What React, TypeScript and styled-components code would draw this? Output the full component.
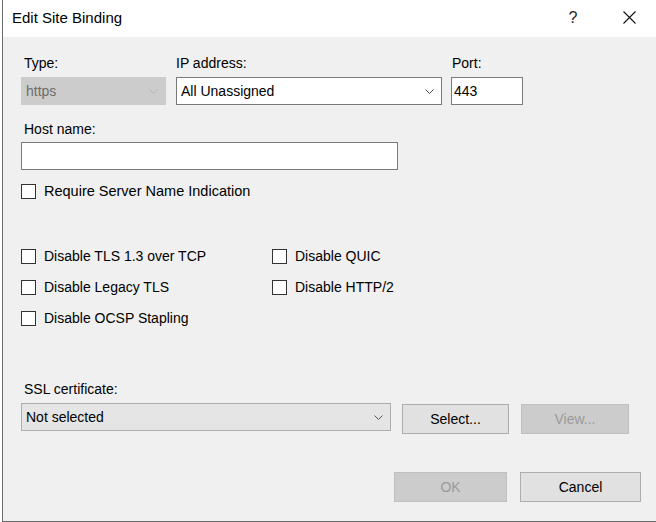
import React from 'react'
import styled, { createGlobalStyle } from 'styled-components';

const GlobalStyle = createGlobalStyle`
    html, body {
        margin: 0;
        padding: 0;
        background: #ffffff;
        font-family: "Liberation Sans", Arial, sans-serif;
        font-size: 14px;
        color: #000;
    }
    * { box-sizing: border-box; }
`

const Window = styled.div`
    margin-left: 2px;
    width: 654px;
    height: 522px;
    border-left: 1px solid #6b6b6b;
    border-bottom: 1px solid #6b6b6b;
    background: #f0f0f0;
    display: flex;
    flex-direction: column;
`

const TitleBar = styled.div`
    height: 37px;
    background: #fff;
    display: flex;
    align-items: center;
    padding-left: 9px;
    padding-right: 4px;
`

const Title = styled.div`
    flex: 1;
    font-size: 15px;
    padding-bottom: 2px;
`

const TitleButton = styled.div<{ $width: number }>`
    width: ${p => p.$width}px;
    height: 37px;
    display: flex;
    align-items: center;
    justify-content: center;
    font-size: 16px;
    color: #222;
    padding-bottom: 2px;
`

const Body = styled.div`
    padding: 18px 0 0 18px;
    display: flex;
    flex-direction: column;
`

const FieldRow = styled.div`
    display: flex;
`

const Field = styled.div<{ $width: number; $gap?: number }>`
    width: ${p => p.$width}px;
    margin-left: ${p => p.$gap || 0}px;
    display: flex;
    flex-direction: column;
`

const Label = styled.div<{ $indent?: number; $mb?: number }>`
    height: 16px;
    line-height: 16px;
    padding-left: ${p => p.$indent ?? 3}px;
    margin-bottom: ${p => p.$mb ?? 6}px;
`

const Combo = styled.div<{ $variant: 'disabled' | 'white' | 'button' }>`
    height: 28px;
    display: flex;
    align-items: center;
    padding: 0 7px 0 4px;
    border: 1px solid ${p => p.$variant === 'white' ? '#7a7a7a' : p.$variant === 'button' ? '#adadad' : '#cccccc'};
    background: ${p => p.$variant === 'white' ? '#ffffff' : p.$variant === 'button' ? '#e5e5e5' : '#cccccc'};
    color: ${p => p.$variant === 'disabled' ? '#6d6d6d' : '#000'};
`

const ComboText = styled.span`
    flex: 1;
    padding-bottom: 1px;
`

const TextBox = styled.div<{ $width: number }>`
    width: ${p => p.$width}px;
    height: 28px;
    border: 1px solid #7a7a7a;
    background: #fff;
    display: flex;
    align-items: center;
    padding: 0 0 1px 2px;
`

const CheckRow = styled.label<{ $size?: number }>`
    display: flex;
    align-items: center;
    gap: 8px;
    height: 16px;
    font-size: ${p => p.$size ?? 14}px;
`

const Box = styled.span`
    width: 15px;
    height: 15px;
    border: 1px solid #333;
    background: #fff;
    flex: none;
`

const OptionGrid = styled.div`
    display: grid;
    grid-template-columns: 251px auto;
    row-gap: 15px;
    margin-top: 49px;
`

const SslRow = styled.div`
    display: flex;
    align-items: flex-start;
`

const Button = styled.div<{ $width: number; $gap?: number; $disabled?: boolean }>`
    width: ${p => p.$width}px;
    height: 30px;
    margin-left: ${p => p.$gap || 0}px;
    display: flex;
    align-items: center;
    justify-content: center;
    padding-bottom: 1px;
    border: 1px solid ${p => p.$disabled ? '#bfbfbf' : '#adadad'};
    background: ${p => p.$disabled ? '#cccccc' : '#e1e1e1'};
    color: ${p => p.$disabled ? '#9a9a9a' : '#000'};
`

const Footer = styled.div`
    display: flex;
    justify-content: flex-end;
    padding-right: 15px;
    margin-top: 38px;
`

function Chevron({ color }: { color: string }) {
    return (
        <svg width="9" height="5" viewBox="0 0 9 5">
            <path d="M0.5 0.5 L4.5 4.5 L8.5 0.5" fill="none" stroke={color} strokeWidth="1" />
        </svg>
    )
}

function Check({ text, size }: { text: string; size?: number }) {
    return (
        <CheckRow $size={size}>
            <Box />
            <span>{text}</span>
        </CheckRow>
    )
}

export default function App() {
    return (
        <>
            <GlobalStyle />
            <Window>
                <TitleBar>
                    <Title>Edit Site Binding</Title>
                    <TitleButton $width={66}>?</TitleButton>
                    <TitleButton $width={46}>
                        <svg width="13" height="13" viewBox="0 0 13 13">
                            <path d="M0.5 0.5 L12.5 12.5 M12.5 0.5 L0.5 12.5" stroke="#111" strokeWidth="1.1" />
                        </svg>
                    </TitleButton>
                </TitleBar>
                <Body>
                    <FieldRow>
                        <Field $width={145}>
                            <Label>Type:</Label>
                            <Combo $variant="disabled">
                                <ComboText>https</ComboText>
                                <Chevron color="#b0b0b0" />
                            </Combo>
                        </Field>
                        <Field $width={266} $gap={10}>
                            <Label $indent={0}>IP address:</Label>
                            <Combo $variant="white">
                                <ComboText>All Unassigned</ComboText>
                                <Chevron color="#555" />
                            </Combo>
                        </Field>
                        <Field $width={72} $gap={9}>
                            <Label $indent={1}>Port:</Label>
                            <TextBox $width={72}>443</TextBox>
                        </Field>
                    </FieldRow>

                    <Field $width={377} style={{ marginTop: 16 }}>
                        <Label $mb={5}>Host name:</Label>
                        <TextBox $width={377} />
                    </Field>

                    <div style={{ marginTop: 13 }}>
                        <Check text="Require Server Name Indication" size={14.5} />
                    </div>

                    <OptionGrid>
                        <Check text="Disable TLS 1.3 over TCP" />
                        <Check text="Disable QUIC" />
                        <Check text="Disable Legacy TLS" />
                        <Check text="Disable HTTP/2" />
                        <Check text="Disable OCSP Stapling" />
                    </OptionGrid>

                    <Field $width={370} style={{ marginTop: 55 }}>
                        <Label>SSL certificate:</Label>
                    </Field>
                    <SslRow>
                        <Field $width={370}>
                            <Combo $variant="button">
                                <ComboText>Not selected</ComboText>
                                <Chevron color="#555" />
                            </Combo>
                        </Field>
                        <Button $width={107} $gap={11} style={{ marginTop: 1 }}>Select...</Button>
                        <Button $width={108} $gap={12} $disabled style={{ marginTop: 1 }}>View...</Button>
                    </SslRow>
                </Body>
                <Footer>
                    <Button $width={113} $disabled>OK</Button>
                    <Button $width={121} $gap={13}>Cancel</Button>
                </Footer>
            </Window>
        </>
    )
}
